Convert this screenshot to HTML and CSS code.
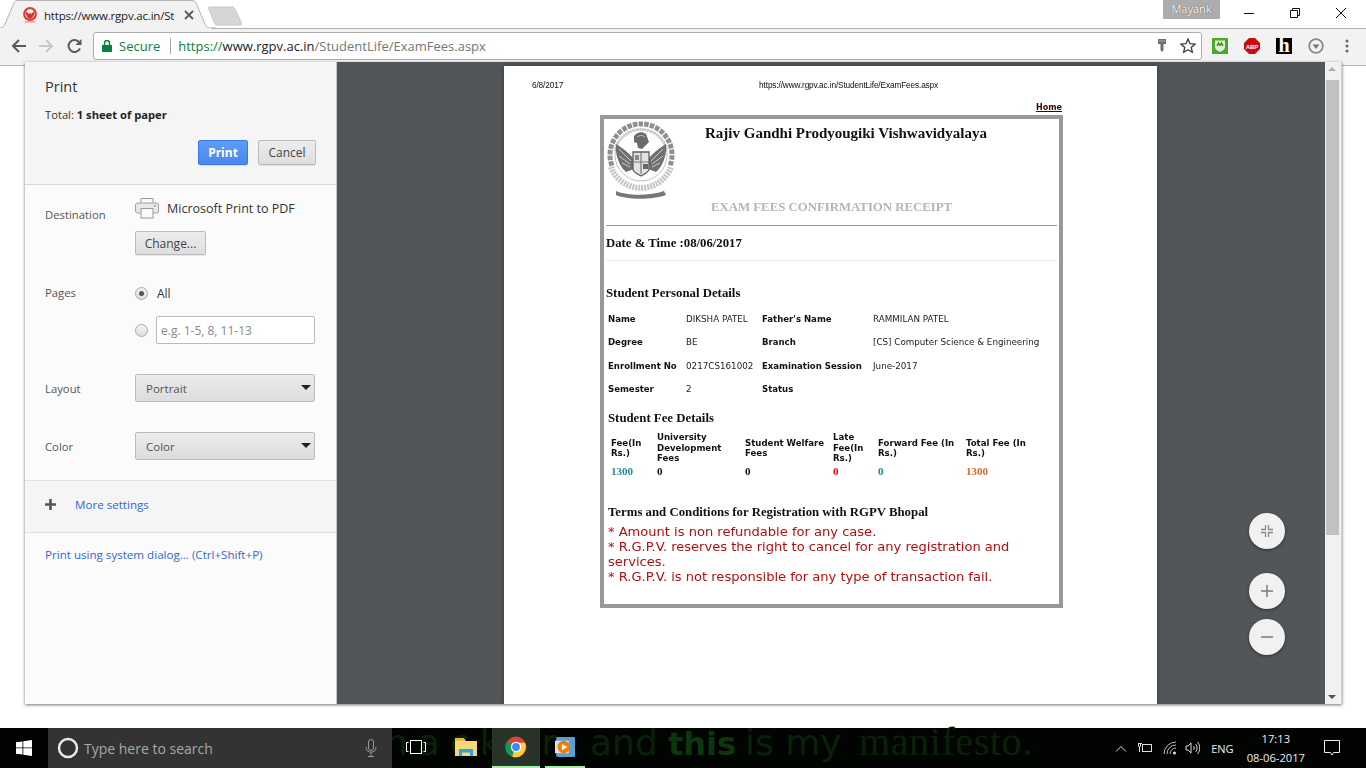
FILE: index.html
```html
<!DOCTYPE html>
<html lang="en">
<head>
<meta charset="utf-8">
<title>Print</title>
<link rel="stylesheet" href="styles.css">
</head>
<body>
<div class="screen">
  <header class="tabstrip">
    <div class="tab">
      <svg class="tabshape" width="222" height="29" viewBox="0 0 222 29"><path d="M0 28H6C9 28 10 26 11 24L20 3C21 1 22 .5 24 .5H198C200 .5 201 1 202 3L211 24C212 26 213 28 217 28H222" fill="#f2f2f2" stroke="#b4b4b4"/></svg>
      <svg class="favicon" width="16" height="16" viewBox="0 0 16 16"><circle cx="8" cy="7" r="5.800" fill="#fff" stroke="#e53935" stroke-width="2.200"/><path d="M3.500 4.500C5 5 6.500 6 7 7.500L8 5l1 2.500C9.500 6 11 5 12.500 4.500 12.500 8 11 10.500 8 12 5 10.500 3.500 8 3.500 4.500z" fill="#d32f2f"/><path d="M3 14h10v1.500H3z" fill="#ef9a9a"/></svg>
      <span class="tabtitle">https://www.rgpv.ac.in/St</span>
      <svg class="tabclose" width="10" height="10" viewBox="0 0 10 10"><path d="M1 1l8 8M9 1l-8 8" stroke="#5a5a5a" stroke-width="1.800"/></svg>
    </div>
    <svg class="newtab" width="36" height="20" viewBox="0 0 36 20"><path d="M1.500 1H24c1.500 0 2 .5 3 2l6.500 14c.5 1 0 2-1.500 2H9c-1.500 0-2-.5-2.500-2L.5 2.500C.2 1.500.5 1 1.500 1z" fill="#d6d6d6" stroke="#c8c8c8"/></svg>
    <div class="winzone">
      <span class="profile">Mayank</span>
      <svg class="wbtn" width="12" height="12" viewBox="0 0 12 12"><path d="M1 6.500h10" stroke="#111" stroke-width="1"/></svg>
      <svg class="wbtn" width="12" height="12" viewBox="0 0 12 12"><path d="M1.500 3.500h7v7h-7zM3.500 3.500v-2h7v7h-2" fill="none" stroke="#111"/></svg>
      <svg class="wbtn" width="12" height="12" viewBox="0 0 12 12"><path d="M1 1l10 10M11 1L1 11" stroke="#111"/></svg>
    </div>
  </header>

  <nav class="toolbar">
    <svg class="navicon" width="15" height="16" viewBox="0 0 15 16"><path d="M15 8H2M8 2L2 8l6 6" fill="none" stroke="#5a5a5a" stroke-width="2"/></svg>
    <svg class="navicon" width="15" height="16" viewBox="0 0 15 16"><path d="M0 8h13M7 2l6 6-6 6" fill="none" stroke="#c8c8c8" stroke-width="2"/></svg>
    <svg class="navicon" width="15" height="16" viewBox="0 0 15 16"><path d="M13 10.500A6 6 0 1 1 12.500 4.500" fill="none" stroke="#5a5a5a" stroke-width="2"/><path d="M14.500 1v6H8.500z" fill="#5a5a5a"/></svg>
    <div class="omnibox">
      <svg class="lock" width="10" height="12" viewBox="0 0 10 12"><path d="M0 5h10v7H0z" fill="#0b8043"/><path d="M2.500 5V3a2.500 2.500 0 0 1 5 0v2" fill="none" stroke="#0b8043" stroke-width="1.500"/></svg>
      <span class="secure">Secure</span>
      <span class="omnisep"></span>
      <span class="url"><span class="urlscheme">https://</span><span class="urlhost">www.rgpv.ac.in</span>/StudentLife/ExamFees.aspx</span>
      <svg class="keyicon" width="8" height="13" viewBox="0 0 8 13"><path d="M0 0h8v5H5.500v6L4 13l-1.500-2V5H0z" fill="#6e6e6e"/><path d="M1 2h6" stroke="#aaa"/></svg>
      <svg class="star" width="16" height="15" viewBox="0 0 16 15"><path d="M8 1l2 4.700 5 .4-3.800 3.300 1.200 4.900L8 11.700l-4.400 2.600 1.200-4.900L1 6.100l5-.4z" fill="none" stroke="#444" stroke-width="1.400"/></svg>
    </div>
    <div class="extensions">
      <svg width="16" height="16" viewBox="0 0 16 16"><rect width="16" height="16" fill="#4ca82a"/><path d="M3 2.500h10V9c0 2.500-3 4-5 5-2-1-5-2.500-5-5z" fill="#dff0d8"/><path d="M5 8l1.500-3L8 7.500 9.500 5 11 8" fill="none" stroke="#3c8c20" stroke-width="1.400"/></svg>
      <svg width="16" height="16" viewBox="0 0 16 16"><path d="M5 0h6l5 5v6l-5 5H5l-5-5V5z" fill="#c70d0d"/><text class="abp" x="8" y="10.500" text-anchor="middle">ABP</text></svg>
      <span class="hicon">h</span>
      <svg width="16" height="16" viewBox="0 0 16 16"><circle cx="8" cy="8" r="6.800" fill="none" stroke="#8a8a8a" stroke-width="1.800"/><path d="M4.500 6.500h7L8 11z" fill="#777"/></svg>
      <svg class="dots" width="4" height="14" viewBox="0 0 4 14"><circle cx="2" cy="2" r="1.500" fill="#666"/><circle cx="2" cy="7" r="1.500" fill="#666"/><circle cx="2" cy="12" r="1.500" fill="#666"/></svg>
    </div>
  </nav>

  <main class="viewport">
    <div class="dialog">
      <aside class="sidebar">
        <section class="sumhead">
          <h1 class="ptitle">Print</h1>
          <p class="total">Total: <b>1 sheet of paper</b></p>
          <div class="actions">
            <button class="btn primary">Print</button>
            <button class="btn">Cancel</button>
          </div>
        </section>
        <section class="settings">
          <div class="setrow dest">
            <span class="setlabel">Destination</span>
            <div class="setctl">
              <div class="destname">
                <svg width="24" height="22" viewBox="0 0 24 22"><path d="M6 6V1.500h12V6" fill="none" stroke="#9a9a9a"/><rect x=".5" y="6" width="23" height="10" rx="2" fill="#e8e8e8" stroke="#a0a0a0"/><rect x="6" y="11.500" width="12" height="9.500" fill="#fafafa" stroke="#9a9a9a"/><rect x="19" y="8" width="2" height="1.500" fill="#999"/></svg>
                <span>Microsoft Print to PDF</span>
              </div>
              <button class="btn change">Change...</button>
            </div>
          </div>
          <div class="setrow pages">
            <span class="setlabel">Pages</span>
            <div class="setctl">
              <label class="radio"><span class="rdot on"></span><span>All</span></label>
              <label class="radio second"><span class="rdot"></span><span class="rangebox">e.g. 1-5, 8, 11-13</span></label>
            </div>
          </div>
          <div class="setrow layout">
            <span class="setlabel">Layout</span>
            <div class="select">Portrait<i class="caret"></i></div>
          </div>
          <div class="setrow color">
            <span class="setlabel">Color</span>
            <div class="select">Color<i class="caret"></i></div>
          </div>
        </section>
        <div class="more">
          <svg width="11" height="11" viewBox="0 0 11 11"><path d="M5.500 0v11M0 5.500h11" stroke="#555" stroke-width="2.600"/></svg>
          <span class="link">More settings</span>
        </div>
        <div class="sysdlg"><span class="link">Print using system dialog... (Ctrl+Shift+P)</span></div>
      </aside>

      <div class="preview">
        <article class="sheet">
          <div class="pagehead"><span>6/8/2017</span><span class="pageurl">https://www.rgpv.ac.in/StudentLife/ExamFees.aspx</span></div>
          <div class="homerow"><a class="home">Home</a></div>
          <div class="receipt">
            <div class="rhead">
              <svg class="emblem" width="70" height="78" viewBox="0 0 70 78">
                <path d="M5.900 44.600A31 31 0 1 1 64.100 44.600" fill="none" stroke="#8f8f8f" stroke-width="5" stroke-dasharray="4.500 1.200"/>
                <circle cx="35" cy="34" r="26" fill="none" stroke="#b0b0b0" stroke-width=".8"/>
                <path d="M9 30A26.500 26.500 0 0 1 61 30" fill="none" stroke="#c4c4c4" stroke-width="3" stroke-dasharray="1.500 1"/>
                <path d="M5 46A32 32 0 0 0 65 46" fill="none" stroke="#c4c4c4" stroke-width="6" stroke-dasharray="2 1"/>
                <path d="M28 38C22 31 15 26 10 23 9 32 12 44 20 51l8-3z" fill="#6f6f6f"/>
                <path d="M42 38c6-7 13-12 18-15 1 9-2 21-10 28l-8-3z" fill="#6f6f6f"/>
                <path d="M13 28l12 12M13 35l11 8M16 42l8 4M57 28L45 40M57 35l-11 8M54 42l-8 4" stroke="#e4e4e4" stroke-width=".8"/>
                <path d="M28 15c3-4 8-5 12-2l3 8-7 7-4-1-1-5-3-1z" fill="#6a6a6a"/>
                <path d="M31 16c3-2 6-2 8 0" fill="none" stroke="#ddd" stroke-width=".8"/>
                <path d="M27 31h16v17c0 3-4 5-8 7-4-2-8-4-8-7z" fill="#e2e2e2" stroke="#5e5e5e" stroke-width="1.300"/>
                <path d="M27 41h16M35 31v22" stroke="#7a7a7a" stroke-width="1.200"/>
                <rect x="37" y="43" width="5" height="5" fill="#666"/>
                <rect x="29" y="34" width="4" height="5" fill="#888"/>
                <path d="M10 70c12 5 34 5 48 0l2 4c-14 5-38 5-50 0z" fill="#777"/>
              </svg>
              <div class="rtitles">
                <h2 class="univ">Rajiv Gandhi Prodyougiki Vishwavidyalaya</h2>
                <h3 class="rectitle">EXAM FEES CONFIRMATION RECEIPT</h3>
              </div>
            </div>
            <hr class="rule">
            <div class="datetime">Date &amp; Time :08/06/2017</div>
            <hr class="rule light">
            <h4 class="sec first">Student Personal Details</h4>
            <div class="persongrid">
              <b>Name</b><span>DIKSHA PATEL</span><b>Father's Name</b><span>RAMMILAN PATEL</span>
              <b>Degree</b><span>BE</span><b>Branch</b><span>[CS] Computer Science &amp; Engineering</span>
              <b>Enrollment No</b><span>0217CS161002</span><b>Examination Session</b><span>June-2017</span>
              <b>Semester</b><span>2</span><b>Status</b><span></span>
            </div>
            <h4 class="sec fee">Student Fee Details</h4>
            <div class="feegrid">
              <b>Fee(In Rs.)</b><b>University Development Fees</b><b>Student Welfare Fees</b><b>Late Fee(In Rs.)</b><b>Forward Fee (In Rs.)</b><b>Total Fee (In Rs.)</b>
              <em class="teal">1300</em><em>0</em><em>0</em><em class="red">0</em><em class="teal2">0</em><em class="orange">1300</em>
            </div>
            <h4 class="sec terms">Terms and Conditions for Registration with RGPV Bhopal</h4>
            <p class="termtext">* Amount is non refundable for any case.<br>* R.G.P.V. reserves the right to cancel for any registration and services.<br>* R.G.P.V. is not responsible for any type of transaction fail.</p>
          </div>
        </article>
        <div class="fabs">
          <span class="fab fit"><svg width="14" height="14" viewBox="0 0 14 14"><path d="M5.500 1v4.500H1M8.500 1v4.500H13M5.500 13V8.500H1M8.500 13V8.500H13" fill="none" stroke="#8a8a8a" stroke-width="1.300"/></svg></span>
          <span class="fab plus"><svg width="12" height="12" viewBox="0 0 12 12"><path d="M6 0v12M0 6h12" stroke="#7a7a7a" stroke-width="1.500"/></svg></span>
          <span class="fab"><svg width="12" height="12" viewBox="0 0 12 12"><path d="M0 6h12" stroke="#7a7a7a" stroke-width="1.500"/></svg></span>
        </div>
      </div>

      <div class="scrollbar">
        <i class="arrow up"></i>
        <div class="thumb"></div>
        <i class="arrow down"></i>
      </div>
    </div>
  </main>

  <footer class="taskbar">
    <div class="wallpaper" aria-hidden="true">
      <span class="w1">hacker</span><span class="w2">and</span><span class="w3">this</span><span class="w4">is my</span><span class="w5">manifesto.</span>
    </div>
    <div class="startbtn"><svg width="16" height="16" viewBox="0 0 16 16"><path d="M0 2.300L6.500 1.400V7.500H0zM7.300 1.300L16 0V7.500H7.300zM0 8.300H6.500V14.500L0 13.700zM7.300 8.300H16V16L7.300 14.700z" fill="#fff"/></svg></div>
    <div class="searchbox">
      <svg width="22" height="22" viewBox="0 0 22 22"><circle cx="11" cy="11" r="9" fill="none" stroke="#e8e8e8" stroke-width="2.500"/></svg>
      <span class="searchtxt">Type here to search</span>
      <svg class="mic" width="12" height="18" viewBox="0 0 12 18"><rect x="3.500" y=".5" width="5" height="11" rx="2.500" fill="none" stroke="#999"/><path d="M1 8c0 7 10 7 10 0M6 14v3M3 17.500h6" fill="none" stroke="#999"/></svg>
    </div>
    <div class="tbicons">
      <span class="tbi"><svg width="20" height="14" viewBox="0 0 20 14"><rect x="4.500" y=".5" width="11" height="13" fill="none" stroke="#fff"/><path d="M2.500 2.500H.5v9h2M17.500 2.500h2v9h-2" fill="none" stroke="#fff"/></svg></span>
      <span class="tbi"><svg width="22" height="18" viewBox="0 0 22 18"><path d="M0 3h22v15H0z" fill="#f8d775"/><path d="M0 0h9l2 3H0z" fill="#e6b84a"/><path d="M4 11h14v7h-3v-3.500H7V18H4z" fill="#2ba6e0"/></svg></span>
      <span class="tbi act"><svg width="22" height="22" viewBox="0 0 18 18"><circle cx="9" cy="9" r="8.500" fill="#db4437"/><path d="M9 9L1.500 4.500A8.500 8.500 0 0 0 6 17z" fill="#0f9d58"/><path d="M9 5.500h7.300A8.500 8.500 0 0 1 6 17z" fill="#ffcd40"/><circle cx="9" cy="9" r="4.200" fill="#fff"/><circle cx="9" cy="9" r="3.200" fill="#4285f4"/></svg></span>
      <span class="tbi run"><svg width="20" height="20" viewBox="0 0 16 16"><rect x="1" y="0" width="15" height="16" rx="1" fill="#5a9fcf"/><rect x="0" y="3" width="11" height="10" fill="#d8e4ec"/><circle cx="7" cy="8" r="5" fill="#f57c00"/><path d="M5.500 5.500L10 8l-4.500 2.500z" fill="#fff"/></svg></span>
    </div>
    <div class="tray">
      <svg width="12" height="7" viewBox="0 0 12 7"><path d="M1 6.500l5-5 5 5" fill="none" stroke="#ddd"/></svg>
      <svg width="16" height="12" viewBox="0 0 16 12"><rect x="5.500" y="2.500" width="9" height="7" fill="none" stroke="#ddd"/><path d="M1 1.500h4M1.500 1v3c0 1 2 1 2 0V1M2.500 4.500V10" fill="none" stroke="#ddd"/></svg>
      <svg width="14" height="14" viewBox="0 0 14 14"><path d="M1 13A12 12 0 0 1 13 1M4 13a9 9 0 0 1 9-9M7 13a6 6 0 0 1 6-6" fill="none" stroke="#bbb"/><circle cx="11.500" cy="12" r="1.500" fill="#ddd"/></svg>
      <svg class="spk" width="15" height="14" viewBox="0 0 15 14"><path d="M1 5h2l3-3v10L3 9H1zM8.500 5c1 1 1 3 0 4M10.500 3c2 2 2 6 0 8M12.500 1c3 3 3 9 0 12" fill="none" stroke="#ddd"/></svg>
      <span class="eng">ENG</span>
      <span class="clock"><span>17:13</span><span>08-06-2017</span></span>
      <svg class="notif" width="16" height="16" viewBox="0 0 16 16"><path d="M.5.5h15v12h-6l-1.500 2.500-1.500-2.500h-6z" fill="none" stroke="#eee"/></svg>
    </div>
  </footer>
</div>
</body>
</html>
```
FILE: styles.css
```css
* { box-sizing: border-box; }
html, body { margin: 0; padding: 0; height: 100%; overflow: hidden; }
body { font-family: "Open Sans", "Liberation Sans", sans-serif; color: #222; background: #fff; }
.screen { width: 1366px; height: 768px; display: flex; flex-direction: column; }

/* tab strip */
.tabstrip { height: 28px; display: flex; align-items: flex-start; position: relative; background: #fff; flex: none; }
.tab { width: 216px; height: 28px; display: flex; align-items: center; position: relative; padding: 2px 0 0 22px; flex: none; }
.tabshape { position: absolute; left: -6px; top: 0; overflow: visible; }
.favicon { position: relative; margin-right: 6px; flex: none; }
.tabtitle { position: relative; font-size: 11.500px; letter-spacing: -.2px; width: 134px; white-space: nowrap; color: #222; flex: none; }
.tabclose { position: relative; margin-left: 6px; flex: none; }
.newtab { margin: 6px 0 0 -8px; flex: none; }
.winzone { margin-left: auto; display: flex; align-items: flex-start; padding-right: 19px; }
.profile { width: 57px; height: 19px; background: #acacac; color: #fff; font-size: 11px; text-align: center; line-height: 17px; text-shadow: 0 0 1px #333; margin-right: 23px; }
.wbtn { margin: 7px 34px 0 0; }
.wbtn:last-child { margin-right: 0; }

/* toolbar */
.toolbar { height: 38px; flex: none; background: #f2f2f2; border-bottom: 1px solid #b8b8b8; display: flex; align-items: center; padding: 0 0 2px 11px; position: relative; }
.toolbar::before { content: ""; position: absolute; left: 211px; right: 0; top: 0; height: 1px; background: #b4b4b4; }
.navicon { margin-right: 13px; flex: none; }
.omnibox { width: 1109px; height: 28px; margin-left: -2px; background: #fff; border: 1px solid #aeaeae; border-radius: 3px; display: flex; align-items: center; padding-left: 8px; flex: none; }
.lock { flex: none; }
.secure { color: #0b8043; font-size: 13px; margin-left: 7px; }
.omnisep { width: 1px; height: 16px; background: #aaa; margin: 0 7px 0 10px; }
.url { font-size: 13px; color: #757575; white-space: nowrap; }
.urlscheme { color: #0b8043; }
.urlhost { color: #222; }
.keyicon { margin-left: auto; }
.star { margin: 0 5px 0 14px; }
.extensions { display: flex; align-items: center; margin-left: 10px; gap: 16px; }
.dots { margin-left: 5px; }
.abp { font: bold 6px "Liberation Sans", sans-serif; fill: #fff; }
.hicon { width: 16px; height: 16px; background: #000; color: #fff; font: bold 20px/15px "Liberation Serif", serif; text-align: center; overflow: hidden; }

/* dialog */
.viewport { flex: 1; position: relative; background: #fff; }
.dialog { position: absolute; left: 25px; top: -4px; width: 1317px; height: 642px; display: flex; box-shadow: 0 1px 3px rgba(0,0,0,.55); background: #525659; }
.sidebar { width: 312px; height: 100%; background: #fbfbfb; border-right: 1px solid #c4c4c4; display: flex; flex-direction: column; font-size: 12px; color: #444; flex: none; }
.sumhead { height: 123px; background: #f5f5f5; border-bottom: 1px solid #d8d8d8; padding: 15px 20px 0; flex: none; }
.ptitle { font-size: 14.500px; font-weight: 400; margin: 0; color: #333; line-height: 20px; }
.total { margin: 10px 0 0; font-size: 11.200px; color: #333; line-height: 16px; }
.total b { font-weight: 700; color: #222; }
.actions { display: flex; justify-content: flex-end; gap: 10px; margin-top: 17px; }
.btn { font: 12px "Open Sans", sans-serif; height: 25px; width: 58px; padding: 0; border: 1px solid #bbb; border-radius: 2px; background: linear-gradient(#ededed, #dedede); color: #444; box-shadow: 0 1px 0 rgba(0,0,0,.08); }
.btn.primary { width: 50px; background: linear-gradient(#5d9cf5, #4a87ee); border-color: #3b78e7; color: #fff; font-weight: 700; }
.settings { flex: 1; padding: 0 20px; position: relative; }
.setrow { display: flex; }
.setlabel { width: 90px; color: #555; font-size: 11.300px; flex: none; }
.setrow.dest { padding-top: 11px; height: 99px; }
.setrow.dest .setlabel { padding-top: 11px; }
.destname { display: flex; align-items: center; gap: 8px; font-size: 12.500px; color: #333; height: 24px; }
.change { width: 71px; height: 24px; margin-top: 11px; display: block; }
.setrow.pages { height: 90px; }
.setrow.pages .setlabel { padding-top: 1px; }
.radio { display: flex; align-items: center; gap: 9px; height: 18px; color: #333; }
.radio.second { margin-top: 14px; height: 28px; gap: 8px; }
.rdot { width: 13px; height: 13px; border-radius: 50%; border: 1px solid #aaa; background: linear-gradient(#f4f4f4, #ddd); position: relative; flex: none; }
.rdot.on::after { content: ""; position: absolute; left: 3px; top: 3px; width: 5px; height: 5px; border-radius: 50%; background: #555; }
.rangebox { width: 159px; height: 28px; background: #fff; border: 1px solid #bbb; border-radius: 2px; color: #8a8a8a; line-height: 28px; padding-left: 4px; }
.setrow.layout { height: 58px; align-items: flex-start; }
.setrow.layout .setlabel, .setrow.color .setlabel { padding-top: 7px; }
.setrow.color { height: 47px; }
.select { width: 180px; height: 28px; background: linear-gradient(#ececec, #dcdcdc); border: 1px solid #bbb; border-radius: 2px; padding-left: 10px; line-height: 27px; font-size: 11.500px; color: #555; position: relative; }
.caret { position: absolute; right: 3px; top: 10px; border: 5px solid transparent; border-top: 5px solid #222; border-bottom: 0; }
.more { height: 53px; background: #f5f5f5; border-top: 1px solid #e2e2e2; border-bottom: 1px solid #e0e0e0; display: flex; align-items: center; gap: 19px; padding: 0 20px 5px; flex: none; }
.link { color: #3367d6; font-size: 11.600px; }
.sysdlg { height: 171px; padding: 13px 20px; flex: none; }

/* preview */
.preview { width: 988px; height: 100%; position: relative; background: #525659; flex: none; padding: 4px 0 0 167px; overflow: hidden; }
.sheet { width: 653px; height: 640px; background: #fff; padding: 13px 0 0 28px; box-shadow: 0 0 4px rgba(0,0,0,.35); font-family: "DejaVu Sans", sans-serif; filter: blur(.25px); }
.pagehead { display: flex; font: 8.300px "Liberation Sans", sans-serif; color: #111; height: 12px; line-height: 12px; letter-spacing: -.15px; }
.pageurl { margin-left: 196px; }
.homerow { height: 24px; width: 530px; text-align: right; padding-top: 4px; }
.home { font: bold 8px/10px "DejaVu Sans", sans-serif; color: #400; text-decoration: underline; }
.receipt { width: 463px; height: 493px; margin-left: 68px; border: 4px solid #999; padding: 2px 2px 0; }
.rhead { display: flex; height: 104px; }
.emblem { flex: none; }
.rtitles { margin-left: 29px; }
.univ { font: bold 15px/20px "Liberation Serif", serif; margin: 2px 0 0; color: #111; white-space: nowrap; }
.rectitle { font: bold 12.800px/16px "Liberation Serif", serif; margin: 56px 0 0 6px; color: #b5b5b5; white-space: nowrap; }
.rule { border: 0; height: 1px; background: #999; margin: 0; }
.rule.light { background: #e6e6e6; }
.datetime { font: bold 12.750px/16px "Liberation Serif", serif; margin: 9px 0; color: #111; }
.sec { font: bold 12.800px/16px "Liberation Serif", serif; margin: 0; color: #111; }
.sec.first { margin-top: 24px; }
.persongrid { display: grid; grid-template-columns: 78px 76px 111px 1fr; grid-auto-rows: 23.400px; margin: 12px 0 0 2px; font-size: 8.750px; line-height: 12px; color: #222; align-items: start; }
.persongrid b { color: #111; font-size: 8.550px; }
.sec.fee { margin: 3px 0 0 2px; }
.feegrid { display: grid; grid-template-columns: 46px 88px 88px 45px 88px 70px; grid-template-rows: 32px 14px; margin: 6.500px 0 0 5px; font-size: 8.600px; line-height: 10.400px; align-items: center; }
.feegrid b { padding-right: 3px; color: #111; }
.feegrid em { font: bold 11px/14px "Liberation Serif", serif; color: #111; }
.feegrid .teal { color: #1f8f8f; }
.feegrid .red { color: #e01010; }
.feegrid .teal2 { color: #178a92; }
.feegrid .orange { color: #d8682a; }
.sec.terms { margin: 26px 0 0 2px; }
.termtext { margin: 4px 0 0 2px; font-size: 13.050px; line-height: 15px; color: #b01010; }

/* floating buttons */
.fabs { position: absolute; left: 912px; top: 451px; display: flex; flex-direction: column; align-items: center; }
.fab { width: 36px; height: 36px; border-radius: 50%; background: #f1f1f1; box-shadow: 0 1px 3px rgba(0,0,0,.45); display: flex; align-items: center; justify-content: center; margin-top: 10px; }
.fab.fit { margin-top: 0; }
.fab.plus { margin-top: 24px; }

/* scrollbar */
.scrollbar { flex: 1; background: #f1f1f1; position: relative; border-right: 1px solid #d0d0d0; }
.thumb { position: absolute; left: 1px; top: 18px; width: 13px; height: 455px; background: #c1c1c1; }
.arrow { position: absolute; left: 3px; border: 4px solid transparent; }
.arrow.up { top: 5px; border-bottom: 4px solid #b0b0b0; border-top: 0; }
.arrow.down { bottom: 5px; border-top: 4px solid #505050; border-bottom: 0; }

/* taskbar */
.taskbar { height: 40px; flex: none; background: #020402; display: flex; align-items: stretch; position: relative; }
.wallpaper { position: absolute; left: 385px; top: -8px; color: #082208; font: 36px/44px "DejaVu Sans", sans-serif; white-space: nowrap; display: flex; align-items: baseline; }
.w1 { width: 205px; letter-spacing: 10px; }
.w2 { width: 78px; }
.w3 { width: 77px; font-weight: 700; font-size: 32px; color: #0c360c; }
.w4 { width: 114px; }
.w5 { font: 40px/44px "Liberation Serif", serif; letter-spacing: .6px; }
.startbtn { width: 48px; display: flex; align-items: center; justify-content: center; position: relative; flex: none; }
.searchbox { width: 344px; background: #333; display: flex; align-items: center; padding-left: 9px; position: relative; flex: none; }
.searchtxt { font-size: 14px; color: #a8a8a8; margin-left: 5px; }
.mic { margin-left: auto; margin-right: 15px; }
.tbicons { display: flex; position: relative; }
.tbi { width: 48px; margin-right: 2px; display: flex; align-items: center; justify-content: center; border-bottom: 2px solid transparent; flex: none; }
.tbi.act { background: #2a332a; border-bottom-color: #a6f0a6; }
.tbi.run { width: 40px; margin-left: 3px; border-bottom-color: #a6f0a6; }
.tray { position: absolute; right: 0; top: 0; bottom: 0; display: flex; align-items: center; gap: 10px; padding-right: 26px; color: #eee; font-size: 12px; }
.spk { margin-left: -2px; }
.eng { font-size: 11px; margin-left: 1px; }
.clock { display: flex; flex-direction: column; align-items: center; line-height: 19px; font-size: 11.200px; margin-left: 3px; }
.notif { margin-left: 9px; }
```
